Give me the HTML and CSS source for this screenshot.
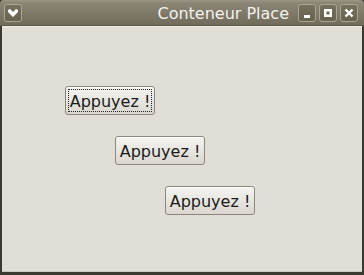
FILE: index.html
```html
<!DOCTYPE html>
<html lang="fr">
<head>
<meta charset="utf-8">
<title>Conteneur Place</title>
<link rel="stylesheet" href="styles.css">
</head>
<body>
<div class="window">
  <div class="titlebar">
    <div class="tb-btn">
      <svg width="10" height="8" viewBox="0 0 10 8"><path d="M0 1 L2 0 L5 3 L8 0 L10 1 L10 3 L5 8 L0 3 Z" fill="#fff"/></svg>
    </div>
    <div class="title">Conteneur Place</div>
    <div class="tb-group">
      <div class="tb-btn">
        <svg width="10" height="10" viewBox="0 0 10 10"><rect x="2" y="7" width="6" height="3" fill="#fff"/></svg>
      </div>
      <div class="tb-btn">
        <svg width="10" height="10" viewBox="0 0 10 10"><path d="M1 1 H9 V9 H1 Z M3.5 3.5 V6.5 H6.5 V3.5 Z" fill="#fff" fill-rule="evenodd"/></svg>
      </div>
      <div class="tb-btn">
        <svg width="10" height="10" viewBox="0 0 10 10"><path d="M1.5 1.5 L8.5 8.5 M8.5 1.5 L1.5 8.5" stroke="#fff" stroke-width="2.4"/></svg>
      </div>
    </div>
  </div>
  <div class="content">
    <button class="btn focused"><span class="label">Appuyez !</span></button>
    <button class="btn"><span class="label">Appuyez !</span></button>
    <button class="btn"><span class="label">Appuyez !</span></button>
  </div>
</div>
</body>
</html>
```

FILE: styles.css
```css
html, body {
  margin: 0;
  padding: 0;
  width: 364px;
  height: 275px;
  overflow: hidden;
  background: #3b3930;
}
.window {
  width: 364px;
  height: 275px;
  box-sizing: border-box;
  display: flex;
  flex-direction: column;
  background: #3b3930;
  padding: 0 2px 3px 2px;
  border-radius: 4px 4px 0 0;
  font-family: "DejaVu Sans", sans-serif;
}
.titlebar {
  height: 26px;
  margin: 0 -2px;
  padding: 0 4px 0 4px;
  display: flex;
  align-items: center;
  background: linear-gradient(#9a9584 0px, #8a8574 3px, #6f6a59 26px);
  border-radius: 4px 4px 0 0;
  border-bottom: 1px solid #5c584a;
  box-sizing: border-box;
}
.tb-btn {
  width: 18px;
  height: 18px;
  box-sizing: border-box;
  border: 1px solid #a9a494;
  border-radius: 3px;
  background: linear-gradient(#76715f, #67624f);
  display: flex;
  align-items: center;
  justify-content: center;
}
.title {
  flex: 1;
  text-align: right;
  color: #f4f2ec;
  font-size: 16px;
  padding-right: 9px;
  padding-top: 1px;
}
.tb-group {
  display: flex;
  gap: 3px;
  padding-right: 2px;
}
.content {
  flex: 1;
  background: #e1ded7;
  border-top: 1px solid #f0eee9;
  border-bottom: 1px solid #c9c6bd;
  display: flex;
  flex-direction: column;
  align-items: flex-start;
  gap: 21px;
  padding-top: 59px;
}
.btn {
  width: 90px;
  height: 29px;
  box-sizing: border-box;
  font-family: "DejaVu Sans", sans-serif;
  font-size: 16px;
  color: #1a1a1a;
  border: 1px solid #8b877b;
  border-radius: 3px;
  background: linear-gradient(#f5f4f1, #e6e3dd 60%, #dbd7cf);
  box-shadow: inset 0 1px 0 #ffffff;
  padding: 2px;
  display: flex;
  align-items: stretch;
  justify-content: stretch;
}
.btn:nth-child(1) { margin-left: 63px; }
.btn:nth-child(2) { margin-left: 113px; }
.btn:nth-child(3) { margin-left: 163px; }
.label {
  flex: 1;
  display: flex;
  align-items: center;
  justify-content: center;
  white-space: nowrap;
  border: 1px dotted transparent;
  padding-top: 1px;
}
.focused .label {
  border-color: #222;
}
```
